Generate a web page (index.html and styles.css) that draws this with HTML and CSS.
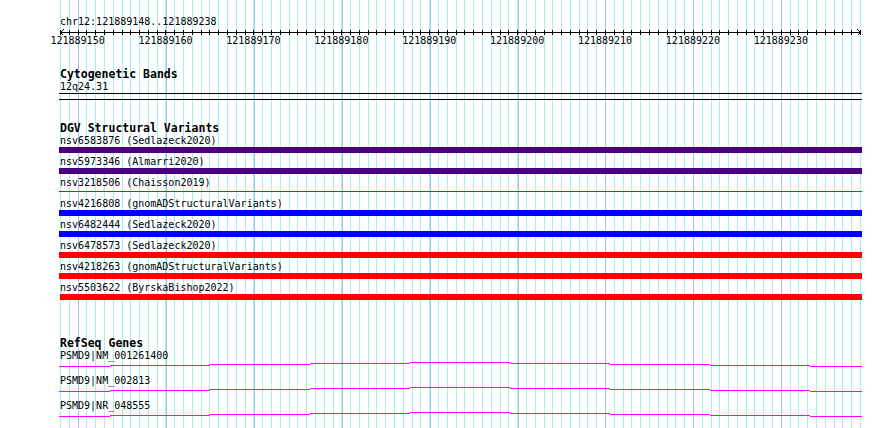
FILE: index.html
```html
<!DOCTYPE html>
<html lang="en">
<head>
    <meta charset="UTF-8">
    <meta name="viewport" content="width=device-width, initial-scale=1.0">
    <title>chr12:121889148..121889238</title>
    <link rel="stylesheet" href="styles.css">
</head>
<body>
    <div class="browser">
        <div class="ruler">
            <div class="position">chr12:121889148..121889238</div>
            <div class="axis">
                <svg class="arrow" width="5" height="9" viewBox="0 0 5 9"><path d="M3.5 2.5 L0.5 5.5 L3.5 8.5"/></svg>
                <svg class="arrow" width="5" height="9" viewBox="0 0 5 9"><path d="M1.5 2.5 L4.5 5.5 L1.5 8.5"/></svg>
            </div>
            <div class="scale">
                <span>121889150</span>
                <span>121889160</span>
                <span>121889170</span>
                <span>121889180</span>
                <span>121889190</span>
                <span>121889200</span>
                <span>121889210</span>
                <span>121889220</span>
                <span>121889230</span>
            </div>
        </div>

        <div class="track cyto">
            <div class="track-title">Cytogenetic Bands</div>
            <div class="item-label">12q24.31</div>
            <div class="band"></div>
        </div>

        <div class="track dgv">
            <div class="track-title">DGV Structural Variants</div>
            <div class="item-label">nsv6583876 (Sedlazeck2020)</div>
            <div class="bar purple"></div>
            <div class="item-label">nsv5973346 (Almarri2020)</div>
            <div class="bar purple"></div>
            <div class="item-label">nsv3218506 (Chaisson2019)</div>
            <div class="bar thin red"></div>
            <div class="item-label">nsv4216808 (gnomADStructuralVariants)</div>
            <div class="bar blue"></div>
            <div class="item-label">nsv6482444 (Sedlazeck2020)</div>
            <div class="bar blue"></div>
            <div class="item-label">nsv6478573 (Sedlazeck2020)</div>
            <div class="bar red"></div>
            <div class="item-label">nsv4218263 (gnomADStructuralVariants)</div>
            <div class="bar red"></div>
            <div class="item-label">nsv5503622 (ByrskaBishop2022)</div>
            <div class="bar red last"></div>
        </div>

        <div class="track refseq">
            <div class="track-title">RefSeq Genes</div>
            <div class="item-label">PSMD9|NM_001261400</div>
            <svg class="gene" width="803" height="6" viewBox="0 0 803 6"><path d="M0 5.5H51M51 4.5H151M151 3.5H251M251 2.5H351M351 1.5H451M451 2.5H551M551 3.5H651M651 4.5H751M751 5.5H803"/></svg>
            <div class="item-label">PSMD9|NM_002813</div>
            <svg class="gene" width="803" height="6" viewBox="0 0 803 6"><path d="M0 5.5H51M51 4.5H151M151 3.5H251M251 2.5H351M351 1.5H451M451 2.5H551M551 3.5H651M651 4.5H751M751 5.5H803"/></svg>
            <div class="item-label">PSMD9|NR_048555</div>
            <svg class="gene" width="803" height="6" viewBox="0 0 803 6"><path d="M0 5.5H51M51 4.5H151M151 3.5H251M251 2.5H351M351 1.5H451M451 2.5H551M551 3.5H651M651 4.5H751M751 5.5H803"/></svg>
        </div>
    </div>
</body>
</html>
```

FILE: styles.css
```css
html {
    background-color: #fff;
}

body {
    margin: 0;
    min-height: 100vh;
    background-image:
        repeating-linear-gradient(to right, #9cc6ea 0 1px, transparent 1px 87.91px),
        repeating-linear-gradient(to right, #aaeeee 0 1px, transparent 1px 8.791px);
    background-position: 77.582px 0, 60px 0;
    background-size: 705px 100%, 801px 100%;
    background-repeat: no-repeat;
    font-family: "DejaVu Sans Mono", monospace;
    font-size: 10px;
    line-height: 11px;
    color: #000;
}

.browser {
    width: 802px;
    padding-left: 60px;
}

.ruler {
    padding-top: 16px;
}

.axis {
    display: flex;
    justify-content: space-between;
    width: 801px;
    height: 8px;
    background-image:
        linear-gradient(#000, #000),
        repeating-linear-gradient(to right, #000 0 1px, transparent 1px 8.791px);
    background-size: 100% 1px, 100% 5px;
    background-position: 0 5px, 0 3px;
    background-repeat: no-repeat;
}

.arrow {
    display: block;
    fill: none;
    stroke: #000;
    shape-rendering: crispEdges;
}

.scale {
    display: flex;
    margin-left: -26.37px;
}

.scale span {
    flex: 0 0 87.91px;
    text-align: center;
}

.track-title {
    font-weight: bold;
    font-size: 11.5px;
    line-height: 12px;
}

.item-label {
    margin-top: 1px;
    white-space: nowrap;
}

.cyto {
    margin-top: 22px;
}

.band {
    width: 803px;
    height: 5px;
    margin: 1px 0 0 -1px;
    border-top: 1px solid #000;
    border-bottom: 1px solid #000;
}

.dgv {
    margin-top: 22px;
}

.bar {
    width: 803px;
    height: 6px;
    margin: 1px 0 3px -1px;
}

.bar.thin {
    height: 1px;
    margin-top: 3px;
    margin-bottom: 6px;
}

.bar.last {
    width: 802px;
    margin-left: 0;
}

.purple {
    background-color: #4b0082;
}

.blue {
    background-color: #0000ff;
}

.red {
    background-color: #ff0000;
}

.refseq {
    margin-top: 37px;
}

.gene {
    display: block;
    margin: 0 0 8px -1px;
    fill: none;
    stroke: #ff00ff;
    shape-rendering: crispEdges;
}
```
